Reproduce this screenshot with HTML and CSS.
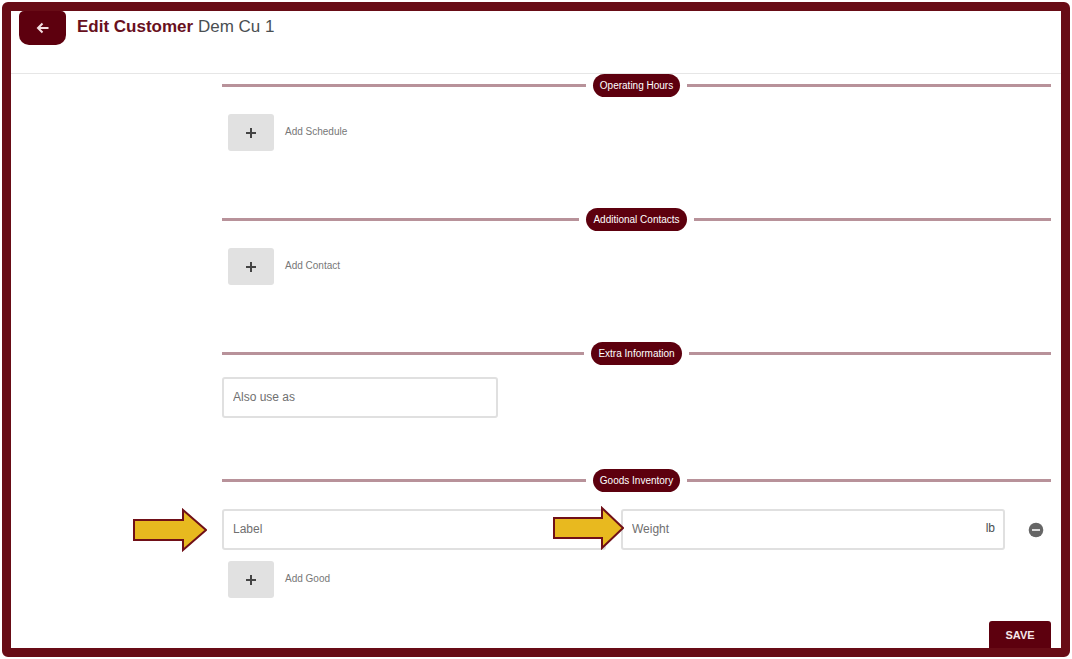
FILE: index.html
```html
<!DOCTYPE html>
<html lang="en">
<head>
<meta charset="UTF-8" />
<meta name="viewport" content="width=device-width, initial-scale=1" />
<title>Edit Customer</title>
<link rel="stylesheet" href="styles.css">
</head>
<body>
  <div class="frame">
    <header class="topbar">
      <button type="button" class="back" aria-label="Back">
        <svg width="14" height="14" viewBox="0 0 14 14"><path d="M12.5 7H2M6.5 2.5L2 7l4.5 4.5" /></svg>
      </button>
      <h1><strong>Edit Customer</strong> Dem Cu 1</h1>
    </header>

    <form class="content">
      <section class="section">
        <h2 class="divider"><span>Operating Hours</span></h2>
        <div class="add-row">
          <button type="button" id="addSchedule" class="add" aria-label="Add Schedule">
            <svg width="12" height="12" viewBox="0 0 12 12"><path d="M6 1v10M1 6h10" /></svg>
          </button>
          <label for="addSchedule">Add Schedule</label>
        </div>
      </section>

      <section class="section">
        <h2 class="divider"><span>Additional Contacts</span></h2>
        <div class="add-row">
          <button type="button" id="addContact" class="add" aria-label="Add Contact">
            <svg width="12" height="12" viewBox="0 0 12 12"><path d="M6 1v10M1 6h10" /></svg>
          </button>
          <label for="addContact">Add Contact</label>
        </div>
      </section>

      <section class="section section-extra">
        <h2 class="divider"><span>Extra Information</span></h2>
        <div class="field field-third">
          <input type="text" id="alias" name="alias" placeholder="Also use as" aria-label="Also use as" />
        </div>
      </section>

      <section class="section section-goods">
        <h2 class="divider"><span>Goods Inventory</span></h2>
        <div class="goods-row">
          <div class="field">
            <input type="text" id="label" name="label" placeholder="Label" aria-label="Label" />
            <svg class="pointer pointer-label" width="74" height="44" viewBox="0 0 74 44"><path d="M1 12H50V2L73 22 50 42V32H1Z" /></svg>
          </div>
          <div class="field">
            <input type="text" id="weight" name="weight" placeholder="Weight" aria-label="Weight" />
            <label class="unit" for="weight">lb</label>
            <svg class="pointer pointer-weight" width="71" height="44" viewBox="0 0 71 44"><path d="M1 12H49V2L70 22 49 42V32H1Z" /></svg>
          </div>
          <button type="button" class="remove" aria-label="Remove good">
            <svg width="16" height="16" viewBox="0 0 16 16"><circle cx="8" cy="8" r="7.3" /><path d="M4 8h8" /></svg>
          </button>
        </div>
        <div class="add-row">
          <button type="button" id="addGood" class="add" aria-label="Add Good">
            <svg width="12" height="12" viewBox="0 0 12 12"><path d="M6 1v10M1 6h10" /></svg>
          </button>
          <label for="addGood">Add Good</label>
        </div>
      </section>

      <div class="actions">
        <button type="submit" class="save">SAVE</button>
      </div>
    </form>
  </div>
</body>
</html>
```
FILE: styles.css
```css
* {
  box-sizing: border-box;
}
body {
  margin: 0;
  padding: 2px;
  background: #fff;
  font-family: "Liberation Sans", Arial, sans-serif;
  color: #4a4f52;
}
button {
  border: none;
  padding: 0;
  font-family: inherit;
  cursor: pointer;
}
svg {
  display: block;
}
.frame {
  border: 9px solid #680c16;
  border-radius: 6px;
}
.topbar {
  display: flex;
  align-items: flex-start;
  gap: 11px;
  height: 63px;
  padding-left: 8px;
  border-bottom: 1px solid #e6e6e6;
}
.back {
  display: flex;
  align-items: center;
  justify-content: center;
  width: 47px;
  height: 34px;
  background: #5d000e;
  border-radius: 5px 5px 10px 10px;
}
.back svg {
  fill: none;
  stroke: #f4dfe2;
  stroke-width: 2;
}
h1 {
  margin: 0;
  padding-top: 4px;
  font-size: 17px;
  line-height: 24px;
  font-weight: 400;
}
h1 strong {
  color: #68101d;
  font-weight: 700;
}
.content {
  padding: 0 10px 0 211px;
}
.section {
  padding-bottom: 57px;
}
.divider {
  display: flex;
  align-items: center;
  gap: 7px;
  margin: 0 0 17px;
  font-size: 10px;
  line-height: 23px;
  font-weight: 400;
}
.divider::before,
.divider::after {
  content: "";
  flex: 1;
  height: 3px;
  background: #b8929a;
}
.divider span {
  padding: 0 7px;
  border-radius: 12px;
  background: #5d000e;
  color: #fff;
}
.add-row {
  display: flex;
  align-items: center;
  gap: 11px;
  padding-left: 6px;
}
.add {
  display: flex;
  align-items: center;
  justify-content: center;
  width: 46px;
  height: 37px;
  background: #e1e1e1;
  border-radius: 3px;
}
.add svg {
  fill: none;
  stroke: #444;
  stroke-width: 2;
}
.add-row label {
  padding-bottom: 2px;
  font-size: 10px;
  color: #777;
}
.section-extra {
  padding-bottom: 51px;
}
.section-extra .divider {
  margin-bottom: 12px;
}
.field {
  position: relative;
  flex: 1;
}
.field-third {
  width: 33.3%;
}
.field input {
  display: block;
  width: 100%;
  height: 41px;
  padding: 0 9px 2px;
  border: 2px solid #e0e0e0;
  border-radius: 3px;
  font-family: inherit;
  font-size: 12px;
  color: #444;
}
.field input::placeholder {
  color: #707070;
  opacity: 1;
}
.unit {
  position: absolute;
  right: 10px;
  top: 12px;
  font-size: 12px;
  line-height: 15px;
}
.goods-row {
  display: flex;
  align-items: center;
  gap: 15px;
  margin-bottom: 11px;
}
.remove {
  display: flex;
  justify-content: center;
  width: 31px;
  background: none;
}
.remove circle {
  fill: #666;
}
.remove path {
  stroke: #ddd;
  stroke-width: 2;
}
/* yellow arrows lie over the row and point at the two fields */
.pointer {
  position: absolute;
  top: -1px;
  z-index: 1;
  fill: #e8b91f;
  stroke: #701018;
  stroke-width: 2;
}
.pointer-label {
  left: -89px;
}
.pointer-weight {
  left: -68px;
  top: -3px;
}
.section-goods {
  padding-bottom: 23px;
}
.actions {
  display: flex;
  justify-content: flex-end;
}
.save {
  width: 62px;
  height: 27px;
  background: #5d000e;
  border-radius: 3px 3px 0 0;
  color: #f6e6e8;
  font-size: 11px;
  font-weight: 700;
}
```
